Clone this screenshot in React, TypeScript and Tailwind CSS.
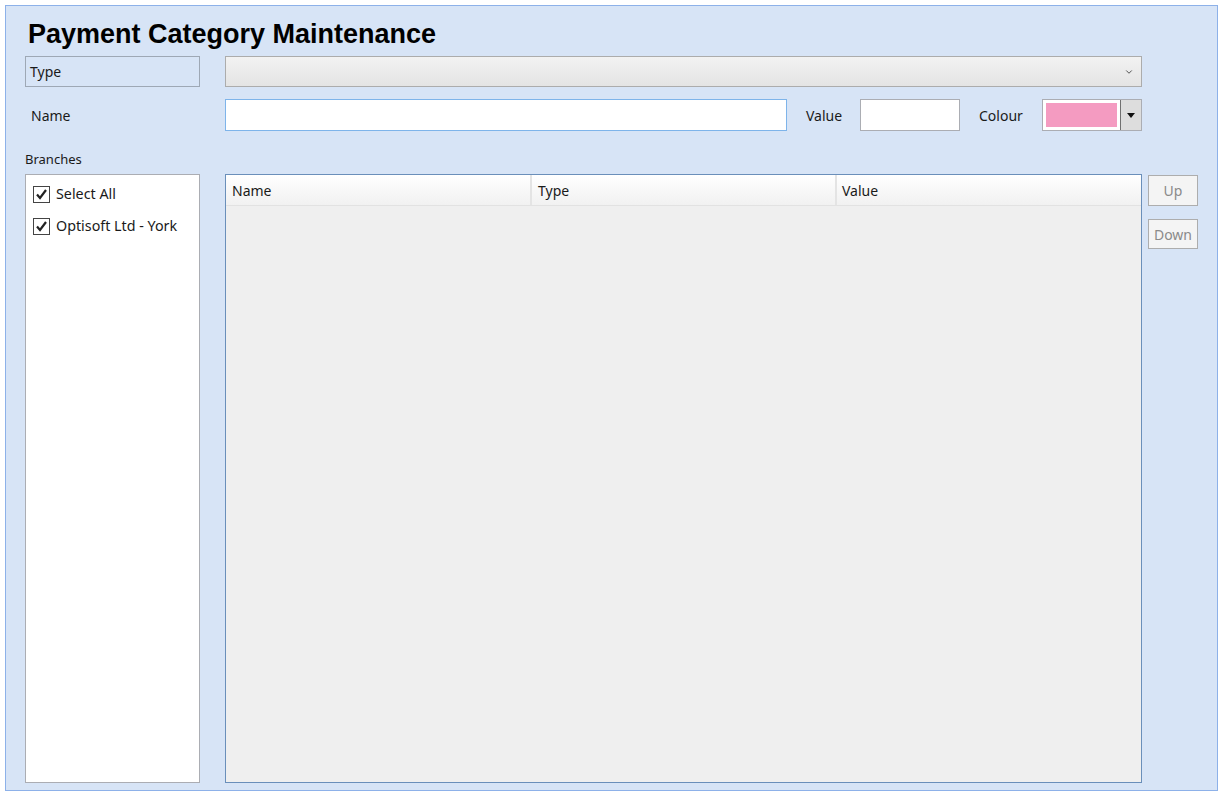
import { ChevronDown } from 'lucide-react';

const font = { fontFamily: '"Noto Sans", "Open Sans", sans-serif' };

const Check = ({ label }: { label: string }) => (
    <div className="flex items-center h-[32px] pl-[7px] gap-[6px]">
        <div className="w-[17px] h-[17px] border border-[#444] bg-white flex items-center justify-center">
            <svg width="13" height="13" viewBox="0 0 13 13">
                <path d="M2 6.5 L5 10 L11 2" stroke="#222" strokeWidth="2.2" fill="none" />
            </svg>
        </div>
        <span className="text-[14.3px] text-[#1a1a1a]">{label}</span>
    </div>
);

const App = () => {
    return (
        <div className="w-[1223px] h-[796px] bg-white p-[5px]" style={font}>
            <div className="h-full border border-[#8db1e9] bg-[#d7e4f6] pl-[19px] flex flex-col">
                <div className="h-[50px] flex items-center pl-[3px] pt-[6px]">
                    <h1 className="text-[27px] font-bold text-black leading-none" style={{ fontFamily: '"Liberation Sans", Arial, sans-serif' }}>
                        Payment Category Maintenance
                    </h1>
                </div>

                <div className="flex items-center gap-[25px] h-[31px]">
                    <div className="w-[175px] h-full border border-[#9ea8b5] flex items-center pl-[4px] text-[14px] text-[#1a1a1a]">Type</div>
                    <div className="w-[917px] h-full border border-[#acacac] bg-gradient-to-b from-[#f2f2f2] to-[#e4e4e4] flex items-center justify-end pr-[7px]">
                        <ChevronDown size={10} strokeWidth={2.2} className="text-[#444]" />
                    </div>
                </div>

                <div className="flex items-center h-[32px] mt-[12px]">
                    <div className="w-[200px] pl-[6px] text-[14px] text-[#1a1a1a]">Name</div>
                    <div className="w-[562px] h-full border border-[#7eb4ea] bg-white"></div>
                    <div className="w-[73px] pl-[19px] text-[14px] text-[#1a1a1a]">Value</div>
                    <div className="w-[100px] h-full border border-[#abadb3] bg-white"></div>
                    <div className="w-[82px] pl-[19px] text-[14px] text-[#1a1a1a]">Colour</div>
                    <div className="w-[100px] h-full border border-[#abadb3] bg-white flex">
                        <div className="flex-1 p-[3px]">
                            <div className="h-full bg-[#f49bc1]"></div>
                        </div>
                        <div className="w-[21px] bg-[#dddddd] border-l border-[#707070] flex items-center justify-center">
                            <svg width="8" height="5" viewBox="0 0 8 5">
                                <path d="M0 0 L8 0 L4 5 Z" fill="#111" />
                            </svg>
                        </div>
                    </div>
                </div>

                <div className="h-[43px] flex items-end pb-[5px] text-[13px] text-[#1a1a1a]">Branches</div>

                <div className="flex h-[609px]">
                    <div className="w-[175px] h-full border border-[#abadb3] bg-white pt-[3px]">
                        <Check label="Select All" />
                        <Check label="Optisoft Ltd - York" />
                    </div>
                    <div className="w-[917px] h-full ml-[25px] border border-[#6a8fba] bg-[#efefef] flex flex-col">
                        <div className="h-[31px] flex bg-gradient-to-b from-white to-[#f1f1f1] border-b border-[#e2e2e2] text-[14px] text-[#1a1a1a]">
                            <div className="w-[306px] border-r-2 border-[#e4e4e4] pl-[6px] flex items-center">Name</div>
                            <div className="w-[305px] border-r-2 border-[#e4e4e4] pl-[6px] flex items-center">Type</div>
                            <div className="flex-1 pl-[5px] flex items-center">Value</div>
                        </div>
                    </div>
                    <div className="ml-[6px] flex flex-col gap-[13px] pt-[1px]">
                        <div className="w-[50px] h-[31px] border border-[#adadad] bg-[#f4f4f4] flex items-center justify-center text-[14px] text-[#8a8a8a]">Up</div>
                        <div className="w-[50px] h-[30px] border border-[#adadad] bg-[#f4f4f4] flex items-center justify-center text-[14px] text-[#8a8a8a]">Down</div>
                    </div>
                </div>
            </div>
        </div>
    );
};

export default App;
